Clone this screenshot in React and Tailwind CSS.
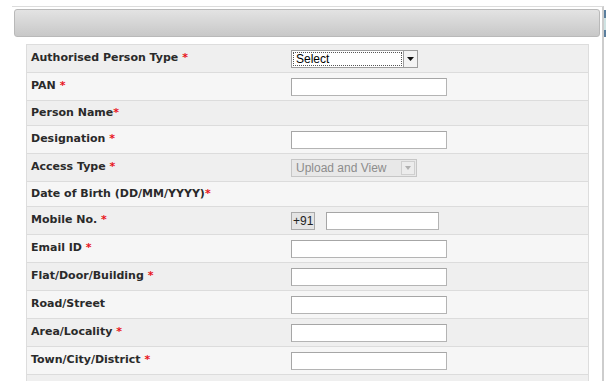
import React from "react";

const Star = () => <span className="text-[#e8141b]">*</span>;

const TextBox = ({ w = "w-[156px]" }) => (
  <div className={`h-[18px] ${w} bg-white border border-[#b4b4b4] border-t-[#a6a6a6] border-l-[#a6a6a6]`} />
);

const SelectBox = () => (
  <div className="h-[18px] w-[127px] flex bg-white border border-[#9c9c9c]">
    <div className="flex-1 m-[1px] border border-dotted border-[#555] flex items-center pl-[2px] text-[12px] text-black leading-none" style={{ fontFamily: '"Liberation Sans", Arial, sans-serif' }}>
      Select
    </div>
    <div className="w-[14px] border-l border-[#9c9c9c] bg-[#f3f3f3] flex items-center justify-center">
      <svg width="7" height="4" viewBox="0 0 7 4"><path d="M0 0h7L3.5 4z" fill="#111" /></svg>
    </div>
  </div>
);

const DisabledSelect = () => (
  <div className="h-[18px] w-[126px] flex bg-[#e8e8e8] border border-[#c6c6c6]">
    <div className="flex-1 flex items-center pl-[4px] text-[12px] text-[#8c8c8c] leading-none" style={{ fontFamily: '"Liberation Sans", Arial, sans-serif' }}>
      Upload and View
    </div>
    <div className="w-[14px] my-[1px] mr-[1px] border border-[#cfcfcf] bg-[#ececec] flex items-center justify-center">
      <svg width="6" height="4" viewBox="0 0 6 4"><path d="M0 0h6L3 4z" fill="#b0b0b0" /></svg>
    </div>
  </div>
);

const Mobile = () => (
  <div className="flex items-center gap-[11px]">
    <div className="h-[18px] w-[24px] bg-[#e4e4e4] border border-[#a9a9a9] flex items-center text-[12px] text-[#222] leading-none pl-[1px]" style={{ fontFamily: '"Liberation Sans", Arial, sans-serif' }}>
      +91
    </div>
    <TextBox w="w-[113px]" />
  </div>
);

const rows = [
  { label: "Authorised Person Type", star: " ", field: <SelectBox /> },
  { label: "PAN", star: " ", field: <TextBox /> },
  { label: "Person Name", star: "", field: null },
  { label: "Designation", star: " ", field: <TextBox /> },
  { label: "Access Type", star: " ", field: <DisabledSelect /> },
  { label: "Date of Birth (DD/MM/YYYY)", star: "", field: null },
  { label: "Mobile No.", star: " ", field: <Mobile /> },
  { label: "Email ID", star: " ", field: <TextBox /> },
  { label: "Flat/Door/Building", star: " ", field: <TextBox /> },
  { label: "Road/Street", star: null, field: <TextBox /> },
  { label: "Area/Locality", star: " ", field: <TextBox /> },
  { label: "Town/City/District", star: " ", field: <TextBox /> },
  { label: "", star: null, field: null, last: true },
];

export default function App() {
  return (
    <div className="w-[610px] h-[381px] bg-white overflow-hidden relative">
      <div className="ml-[12px] mt-[6px] w-[592px] h-[375px] border-t border-[#dcdcdc] border-r-2 border-r-[#cdcdcd]">
        <div className="mx-[2px] mt-[2px] h-[28px] rounded-[3px] border border-[#b9b9b9] bg-gradient-to-b from-[#e3e3e3] to-[#c8c8c8]" />
        <div className="ml-[14px] mt-[7px] w-[563px] border border-[#dddddd] border-b-0" style={{ fontFamily: '"DejaVu Sans", Verdana, sans-serif' }}>
          {rows.map((r, i) => (
            <div
              key={i}
              className={`flex items-center border-b border-[#dcdcdc] ${i % 2 === 0 ? "bg-[#efefef]" : "bg-[#f6f6f6]"} ${r.last ? "h-[20px]" : r.field ? "h-[28px]" : "h-[25px]"}`}
            >
              <div className="w-[259px] pl-[4px] text-[11px] font-bold text-[#2a2a2a] whitespace-nowrap">
                {r.label}
                {r.star !== null && r.label && (
                  <>
                    {r.star}
                    <Star />
                  </>
                )}
              </div>
              <div className="pl-[5px]">{r.field}</div>
            </div>
          ))}
        </div>
      </div>
      <div className="absolute left-[604px] top-[10px] w-[2px] h-[8px] bg-[#5b7f9e]" />
      <div className="absolute left-[604px] top-[18px] w-[2px] h-[12px] bg-[#cfe3e3]" />
      <div className="absolute left-[604px] top-[30px] w-[2px] h-[7px] bg-[#5b7f9e]" />
    </div>
  );
}
